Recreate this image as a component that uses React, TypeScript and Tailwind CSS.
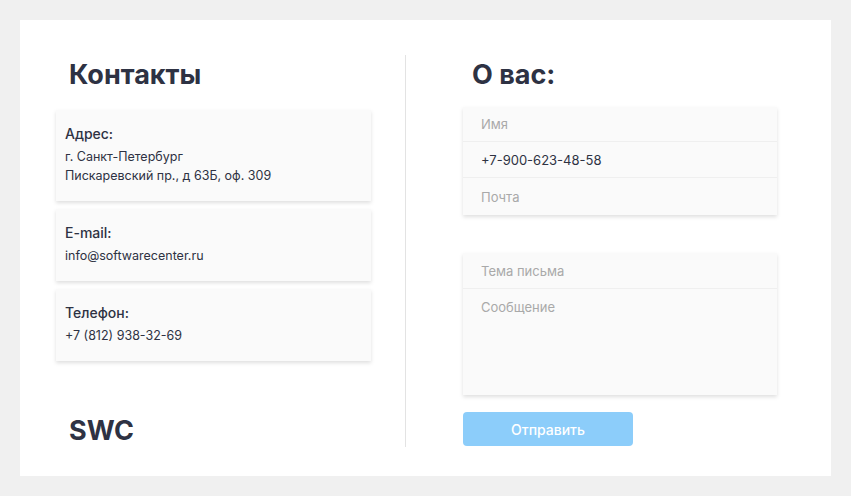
export default function App() {
  const cards = [
    { label: "Адрес:", lines: ["г. Санкт-Петербург", "Пискаревский пр., д 63Б, оф. 309"] },
    { label: "E-mail:", lines: ["info@softwarecenter.ru"] },
    { label: "Телефон:", lines: ["+7 (812) 938-32-69"] },
  ];

  return (
    <div className="h-[496px] w-[851px] bg-[#f0f0f0] p-[20px] font-['Inter',sans-serif] text-[#2e3243]">
      <div className="flex h-[456px] bg-white">
        {/* контакты */}
        <div className="flex w-[385px] flex-col pl-[36px] pt-[39px]">
          <h1 className="pl-[13px] text-[27px] font-bold leading-[32px]">Контакты</h1>
          <div className="mt-[19px] flex w-[315px] flex-col gap-[8px]">
            {cards.map((c) => (
              <div
                key={c.label}
                className="bg-[#fafafa] px-[9px] pb-[16px] pt-[14px] shadow-[0_2px_4px_rgba(0,0,0,0.13)]"
              >
                <div className="text-[14px] font-medium leading-[20px]">{c.label}</div>
                <div className="mt-[3px] text-[12.5px] leading-[19px]">
                  {c.lines.map((l) => (
                    <div key={l}>{l}</div>
                  ))}
                </div>
              </div>
            ))}
          </div>
          <div className="mt-[54px] pl-[13px] text-[27px] font-bold leading-[32px]">SWC</div>
        </div>

        <div className="mb-[29px] mt-[35px] w-px bg-[#e3e3e3]" />

        {/* форма */}
        <div className="flex flex-1 flex-col pl-[57px] pt-[39px]">
          <h2 className="pl-[9px] text-[27px] font-bold leading-[32px]">О вас:</h2>
          <div className="mt-[16px] w-[314px] bg-[#fafafa] text-[13px] shadow-[0_2px_4px_rgba(0,0,0,0.13)]">
            <input
              placeholder="Имя"
              className="block h-[35px] w-full border-b border-[#efefef] bg-transparent px-[18px] outline-none placeholder:text-[#a9a9a9]"
            />
            <input
              defaultValue="+7-900-623-48-58"
              className="block h-[36px] w-full border-b border-[#efefef] bg-transparent px-[18px] outline-none"
            />
            <input
              placeholder="Почта"
              className="block h-[37px] w-full bg-transparent px-[18px] outline-none placeholder:text-[#a9a9a9]"
            />
          </div>
          <div className="mt-[38px] w-[314px] bg-[#fafafa] text-[13px] shadow-[0_2px_4px_rgba(0,0,0,0.13)]">
            <input
              placeholder="Тема письма"
              className="block h-[36px] w-full border-b border-[#efefef] bg-transparent px-[18px] outline-none placeholder:text-[#a9a9a9]"
            />
            <textarea
              placeholder="Сообщение"
              className="block h-[106px] w-full resize-none bg-transparent px-[18px] pt-[9px] outline-none placeholder:text-[#a9a9a9]"
            />
          </div>
          <button className="mt-[17px] h-[34px] w-[170px] rounded-[4px] bg-[#8ccdfa] text-[14px] font-medium text-white">
            Отправить
          </button>
        </div>
      </div>
    </div>
  );
}
